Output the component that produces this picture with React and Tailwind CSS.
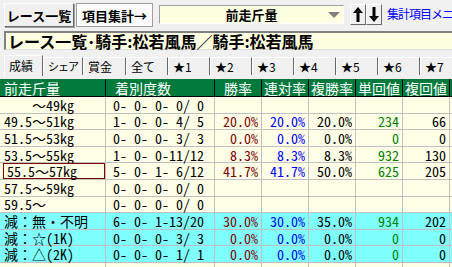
import React from 'react'

const rows = [
  { label: '    ～49kg', rec: '0- 0- 0- 0/ 0' },
  { label: '49.5～51kg', rec: '1- 0- 0- 4/ 5', w: '20.0%', r: '20.0%', f: '20.0%', t: '234', p: '66' },
  { label: '51.5～53kg', rec: '0- 0- 0- 3/ 3', w: '0.0%', r: '0.0%', f: '0.0%', t: '0', p: '0' },
  { label: '53.5～55kg', rec: '1- 0- 0-11/12', w: '8.3%', r: '8.3%', f: '8.3%', t: '932', p: '130' },
  { label: '55.5～57kg', rec: '5- 0- 1- 6/12', w: '41.7%', r: '41.7%', f: '50.0%', t: '625', p: '205', sel: true },
  { label: '57.5～59kg', rec: '0- 0- 0- 0/ 0' },
  { label: '59.5～', rec: '0- 0- 0- 0/ 0' },
  { label: '減：無・不明', rec: '6- 0- 1-13/20', w: '30.0%', r: '30.0%', f: '35.0%', t: '934', p: '202', cyan: true },
  { label: '減：☆(1K)', rec: '0- 0- 0- 3/ 3', w: '0.0%', r: '0.0%', f: '0.0%', t: '0', p: '0', cyan: true },
  { label: '減：△(2K)', rec: '0- 0- 0- 1/ 1', w: '0.0%', r: '0.0%', f: '0.0%', t: '0', p: '0', cyan: true },
  { label: '', rec: '' }
]

const tabs = [
  { name: 'シェア', w: 'w-[40px]', tight: true },
  { name: '賞金', w: 'w-[43px]' },
  { name: '全て', w: 'w-[42px]' },
  { name: '★1', w: 'w-[42px]' },
  { name: '★2', w: 'w-[42px]' },
  { name: '★3', w: 'w-[42px]' },
  { name: '★4', w: 'w-[42px]' },
  { name: '★5', w: 'w-[42px]' },
  { name: '★6', w: 'w-[42px]' },
  { name: '★7', w: 'w-[42px]' }
]

function Arrow({ down }) {
  return (
    <svg width="10" height="15" viewBox="0 0 10 15" className={down ? 'rotate-180' : ''}>
      <path d="M5 0 L10 6 L6.5 6 L6.5 15 L3.5 15 L3.5 6 L0 6 Z" fill="#000" />
    </svg>
  )
}

export default function App() {
  const cell = 'h-full flex items-center border-r border-[#c0c0c0] whitespace-pre'
  return (
    <div className="w-[452px] h-[267px] overflow-hidden bg-[#f0f0f0] font-['Noto_Sans_CJK_JP',sans-serif] text-black">
      {/* 上部ボタン */}
      <div className="flex items-start pt-[3px] pl-[4px] h-[28px] whitespace-nowrap">
        <button className="shrink-0 w-[70px] h-[24px] px-0 bg-[#f0f0f0] border border-t-white border-l-white border-r-[#696969] border-b-[#696969] shadow-[1px_1px_0_#a0a0a0] text-[13px] font-bold leading-none whitespace-nowrap">
          レース一覧
        </button>
        <button className="shrink-0 ml-[2px] w-[77px] h-[24px] px-0 bg-[#fbfbfb] border border-[#a0a0a0] text-[13px] font-bold leading-none whitespace-nowrap">
          項目集計→
        </button>
        <div className="shrink-0 ml-[6px] mt-[2px] w-[185px] h-[19px] bg-[#ffffe1] border border-t-[#a0a0a0] border-l-[#a0a0a0] border-r-white border-b-white relative flex items-center justify-center">
          <span className="text-[13px] font-bold leading-none">前走斤量</span>
          <svg className="absolute right-[3px] top-[6px]" width="12" height="6" viewBox="0 0 12 6">
            <polygon points="0,0 12,0 6,6" fill="#808080" />
          </svg>
        </div>
        <div className="shrink-0 ml-[6px] mt-[1px] flex">
          <div className="w-[16px] h-[21px] bg-[#f0f0f0] border border-t-white border-l-white border-r-[#696969] border-b-[#696969] flex items-center justify-center">
            <Arrow />
          </div>
          <div className="w-[16px] h-[21px] bg-[#f0f0f0] border border-t-white border-l-white border-r-[#696969] border-b-[#696969] flex items-center justify-center">
            <Arrow down />
          </div>
        </div>
        <span className="shrink-0 ml-[5px] mt-[5px] text-[12px] tracking-[-1px] leading-none text-[#0000ff] whitespace-nowrap">集計項目メニュー</span>
      </div>

      {/* タイトル */}
      <div className="ml-[4px] mt-[3px] w-[460px] h-[19px] bg-[#ffffe1] border-t-2 border-l-2 border-t-[#808080] border-l-[#808080] border-b border-b-[#dcdcdc] flex items-center pl-[2px]">
        <span className="text-[16px] font-bold leading-none whitespace-nowrap">レース一覧･騎手:松若風馬／騎手:松若風馬</span>
      </div>

      {/* タブ */}
      <div className="flex items-end h-[26px] pl-[4px] text-[12px] leading-none whitespace-nowrap">
        <div className="shrink-0 w-[39px] h-[21px] bg-[#f0f0f0] border-l border-t border-l-white border-t-white border-r border-r-[#696969] flex items-start pt-[4px] pl-[4px]">
          成績
        </div>
        {tabs.map(t => (
          <div key={t.name} className={`${t.w} shrink-0 h-[18px] mb-[1px] bg-[#f0f0f0] border-l border-t border-l-white border-t-white border-r border-r-[#696969] flex items-center pl-[4px] ${t.tight ? 'text-[11px] tracking-[-1px]' : ''}`}>
            {t.name}
          </div>
        ))}
      </div>

      {/* 表 */}
      <div className="mt-[3px] font-['Noto_Sans_Mono_CJK_JP','Noto_Sans_CJK_JP',monospace] text-[14px] leading-none">
        <div className="grid grid-cols-[106px_109px_47px_47px_47px_47px_47px_1fr] h-[18px] bg-[#007a3c] text-white border-b border-black">
          <div className="h-full flex items-center pl-[4px] border-r border-black">前走斤量</div>
          <div className="h-full flex items-center pl-[9px] border-r border-black">着別度数</div>
          <div className="h-full flex items-center justify-center border-r border-black">勝率</div>
          <div className="h-full flex items-center justify-center border-r border-black">連対率</div>
          <div className="h-full flex items-center justify-center border-r border-black">複勝率</div>
          <div className="h-full flex items-center justify-center border-r border-black">単回値</div>
          <div className="h-full flex items-center justify-center border-r border-black">複回値</div>
          <div />
        </div>
        {rows.map((r, i) => (
          <div
            key={i}
            className={`grid grid-cols-[106px_109px_47px_47px_47px_47px_47px_1fr] h-[16.6px] border-b border-[#c0c0c0] ${r.cyan ? 'bg-[#80ffff]' : 'bg-[#ffffe8]'}`}
          >
            <div className={`${cell} pl-[4px] ${r.sel ? 'shadow-[inset_0_0_0_1px_#800000] ml-[3px] pl-[1px]' : ''}`}>{r.label}</div>
            <div className={`${cell} pl-[7px]`}>{r.rec}</div>
            <div className={`${cell} justify-end pr-[3px] text-[#800000]`}>{r.w}</div>
            <div className={`${cell} justify-end pr-[3px] text-[#0000ff]`}>{r.r}</div>
            <div className={`${cell} justify-end pr-[3px]`}>{r.f}</div>
            <div className={`${cell} justify-end pr-[3px] text-[#008000]`}>{r.t}</div>
            <div className={`${cell} justify-end pr-[3px]`}>{r.p}</div>
            <div />
          </div>
        ))}
      </div>
    </div>
  )
}
